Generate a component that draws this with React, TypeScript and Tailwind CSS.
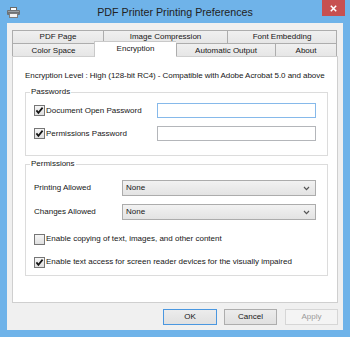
import React from "react";

function Check({ checked }: { checked: boolean }) {
  return (
    <svg width="11" height="11" viewBox="0 0 11 11" className="shrink-0">
      <defs>
        <linearGradient id="cg" x1="0" y1="0" x2="0" y2="1">
          <stop offset="0" stopColor="#f7f7f7" />
          <stop offset="1" stopColor="#dedede" />
        </linearGradient>
      </defs>
      <rect x="0.5" y="0.5" width="10" height="10" fill="url(#cg)" stroke="#767676" />
      {checked && (
        <path d="M2.4 5.4 L4.4 7.8 L8.6 2.6" fill="none" stroke="#151515" strokeWidth="1.7" />
      )}
    </svg>
  );
}

function Chevron() {
  return (
    <svg width="7" height="5" viewBox="0 0 7 5">
      <path d="M1 1 L3.5 3.6 L6 1" fill="none" stroke="#555" strokeWidth="1.2" />
    </svg>
  );
}

function Select({ value }: { value: string }) {
  return (
    <div className="w-[194px] h-[16px] border border-[#acacac] bg-gradient-to-b from-[#f2f2f2] to-[#e3e3e3] flex items-center justify-between pl-[3px] pr-[5px]">
      <span className="leading-[10px]">{value}</span>
      <Chevron />
    </div>
  );
}

export default function App() {
  return (
    <div className="w-[350px] h-[337px] bg-[#6fb3e9] flex flex-col font-['Liberation_Sans',Arial,sans-serif] text-[8px] text-[#161616] overflow-hidden">
      {/* title bar */}
      <div className="h-[23px] grid grid-cols-[1fr_auto_1fr] shrink-0">
        <div className="pl-[7px] pt-[7px]">
          <svg width="13" height="11" viewBox="0 0 13 11">
            <rect x="3.5" y="0.5" width="6" height="3" fill="#ffffff" stroke="#6a6a6a" />
            <rect x="0" y="3" width="13" height="5" rx="1" fill="#6e7275" />
            <rect x="1" y="4" width="11" height="1" fill="#9aa0a4" />
            <rect x="2.5" y="6.5" width="8" height="4" fill="#f2f2f2" stroke="#7d7d7d" />
          </svg>
        </div>
        <div className="text-[10.7px] leading-[23px] text-[#222] pt-[1px] whitespace-nowrap">PDF Printer Printing Preferences</div>
        <div className="flex justify-end pr-[5px]">
          <div className="w-[23px] h-[16px] bg-[#c75050] flex items-center justify-center">
            <svg width="7" height="7" viewBox="0 0 7 7">
              <path d="M0.8 0.8 L6.2 6.2 M6.2 0.8 L0.8 6.2" stroke="#fff" strokeWidth="1.5" />
            </svg>
          </div>
        </div>
      </div>

      {/* client */}
      <div className="mx-[7px] mb-[7px] flex-1 bg-[#f0f0f0] flex flex-col px-[5px] pt-[7px]">
        {/* tabs row 1 */}
        <div className="flex h-[13px] whitespace-nowrap">
          <div className="w-[91px] border-l border-t border-[#adadad] bg-gradient-to-b from-[#f0f0f0] to-[#e6e6e6] flex items-center justify-center leading-[10px]">PDF Page</div>
          <div className="w-[124px] border-l border-t border-[#adadad] bg-gradient-to-b from-[#f0f0f0] to-[#e6e6e6] flex items-center justify-center leading-[10px]">Image Compression</div>
          <div className="w-[110px] border-l border-t border-r border-[#adadad] bg-gradient-to-b from-[#f0f0f0] to-[#e6e6e6] flex items-center justify-center leading-[10px]">Font Embedding</div>
        </div>
        {/* tabs row 2 */}
        <div className="flex h-[13px] items-start whitespace-nowrap">
          <div className="w-[82px] h-[13px] border-l border-t border-[#adadad] bg-gradient-to-b from-[#f0f0f0] to-[#e6e6e6] flex items-center justify-center leading-[10px] pt-[1px]">Color Space</div>
          <div className="relative z-10 w-[82px] h-[16px] -mt-[2px] border-l border-t border-[#c9c9c9] bg-white flex justify-center leading-[10px] pt-[2px]">Encryption</div>
          <div className="w-[99px] h-[13px] border-l border-t border-[#adadad] bg-gradient-to-b from-[#f0f0f0] to-[#e6e6e6] flex items-center justify-center leading-[10px] pt-[1px]">Automatic Output</div>
          <div className="w-[62px] h-[13px] border-l border-t border-r border-[#adadad] bg-gradient-to-b from-[#f0f0f0] to-[#e6e6e6] flex items-center justify-center leading-[10px] pt-[1px]">About</div>
        </div>

        {/* panel */}
        <div className="h-[247px] border border-[#cfcfcf] bg-white pl-[12px] pr-[9px] flex flex-col whitespace-nowrap">
          <div className="mt-[14px] leading-[10px] tracking-[-0.05px]">
            Encryption Level : High (128-bit RC4) - Compatible with Adobe Acrobat 5.0 and above
          </div>

          {/* Passwords group */}
          <div className="mt-[11px] border border-[#dcdcdc] pl-[8px] flex flex-col pb-[14px]">
            <span className="-mt-[6px] -ml-[4px] self-start bg-white px-[1px] leading-[10px]">Passwords</span>
            <div className="mt-[6px] flex items-center h-[15px]">
              <div className="w-[123px] flex items-center gap-[1px]">
                <Check checked />
                <span className="leading-[10px]">Document Open Password</span>
              </div>
              <div className="w-[159px] h-[15px] border border-[#86b9ea] bg-white" />
            </div>
            <div className="mt-[8px] flex items-center h-[15px]">
              <div className="w-[123px] flex items-center gap-[1px]">
                <Check checked />
                <span className="leading-[10px]">Permissions Password</span>
              </div>
              <div className="w-[159px] h-[15px] border border-[#b4b6ba] bg-white" />
            </div>
          </div>

          {/* Permissions group */}
          <div className="mt-[8px] border border-[#dcdcdc] pl-[8px] flex flex-col pb-[7px]">
            <span className="-mt-[6px] -ml-[4px] self-start bg-white px-[1px] leading-[10px]">Permissions</span>
            <div className="mt-[11px] flex items-center h-[16px]">
              <div className="w-[88px] leading-[10px]">Printing Allowed</div>
              <Select value="None" />
            </div>
            <div className="mt-[8px] flex items-center h-[16px]">
              <div className="w-[88px] leading-[10px]">Changes Allowed</div>
              <Select value="None" />
            </div>
            <div className="mt-[13px] flex items-center gap-[1px] h-[12px]">
              <Check checked={false} />
              <span className="leading-[10px]">Enable copying of text, images, and other content</span>
            </div>
            <div className="mt-[11px] flex items-center gap-[1px] h-[12px]">
              <Check checked />
              <span className="leading-[10px]">Enable text access for screen reader devices for the visually impaired</span>
            </div>
          </div>
        </div>

        {/* buttons */}
        <div className="mt-[6px] flex justify-end">
          <div className="w-[54px] h-[16px] border border-[#4a97e0] bg-gradient-to-b from-[#ececec] to-[#e0e0e0] flex items-center justify-center leading-[10px]">OK</div>
          <div className="ml-[7px] w-[53px] h-[16px] border border-[#adadad] bg-gradient-to-b from-[#ececec] to-[#e0e0e0] flex items-center justify-center leading-[10px]">Cancel</div>
          <div className="ml-[8px] w-[53px] h-[16px] border border-[#d6d6d6] bg-[#f4f4f4] flex items-center justify-center leading-[10px] text-[#9a9a9a]">Apply</div>
        </div>
      </div>
    </div>
  );
}
